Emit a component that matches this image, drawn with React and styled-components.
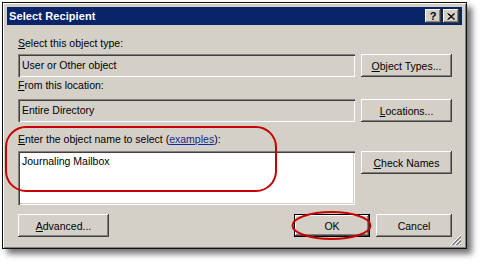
import React from 'react';
import styled, { createGlobalStyle } from 'styled-components';

const GlobalStyle = createGlobalStyle`
  html, body {
    margin: 0;
    padding: 0;
    background: #ffffff;
  }
  body {
    font-family: 'Liberation Sans', Arial, sans-serif;
    font-size: 10.5px;
    color: #000;
  }
`;

const Page = styled.div`
  position: relative;
  padding: 2px 0 0 2px;
  width: 484px;
  height: 267px;
  box-sizing: border-box;
`;

const Dialog = styled.div`
  position: relative;
  width: 465px;
  height: 247px;
  box-sizing: border-box;
  border: 1px solid #111;
  padding: 4px;
  background: #d4d0c8;
  box-shadow: inset 1px 1px #ffffff, inset -1px -1px #808080, 5px 5px 6px rgba(0, 0, 0, 0.55);
  display: flex;
  flex-direction: column;
`;

const TitleBar = styled.div`
  height: 18px;
  background: #0a246a;
  display: flex;
  align-items: center;
  padding: 0 3px 0 2px;
`;

const Title = styled.div`
  flex: 1;
  color: #fff;
  font-weight: bold;
  font-size: 11px;
  letter-spacing: 0.1px;
`;

const CaptionButton = styled.div`
  width: 16px;
  height: 14px;
  box-sizing: border-box;
  background: #d4d0c8;
  margin-left: ${(p) => (p.$gap ? '2px' : '0')};
  box-shadow: inset -1px -1px #404040, inset 1px 1px #ffffff, inset -2px -2px #808080;
  display: flex;
  align-items: center;
  justify-content: center;
  font-weight: bold;
  font-size: 11px;
  line-height: 1;
`;

const Body = styled.div`
  flex: 1;
  padding: 12px 10px 0 11px;
  display: flex;
  flex-direction: column;
`;

const Label = styled.div`
  line-height: 13px;
  height: 13px;
  margin-top: ${(p) => p.$top || 0}px;
  white-space: nowrap;
`;

const Key = styled.span`
  text-decoration: underline;
`;

const Link = styled.span`
  color: #1028a0;
  text-decoration: underline;
`;

const FieldRow = styled.div`
  display: grid;
  grid-template-columns: 337px 91px;
  column-gap: 6px;
  align-items: start;
  margin-top: ${(p) => p.$top || 0}px;
`;

const Field = styled.div`
  height: ${(p) => p.$h || 23}px;
  box-sizing: border-box;
  background: ${(p) => (p.$white ? '#ffffff' : '#d4d0c8')};
  box-shadow: inset 1px 1px #808080, inset 2px 2px #404040, inset -1px -1px #ffffff, inset -2px -2px #d4d0c8;
  padding: ${(p) => (p.$white ? '4px 4px' : '0 4px')};
  line-height: ${(p) => (p.$white ? '13px' : '22px')};
  white-space: nowrap;
`;

const Button = styled.div`
  height: 23px;
  width: ${(p) => p.$w || 91}px;
  box-sizing: border-box;
  background: #d4d0c8;
  box-shadow: ${(p) =>
    p.$default
      ? 'inset 0 0 0 1px #000, inset -2px -2px #404040, inset 2px 2px #ffffff, inset -3px -3px #808080'
      : 'inset -1px -1px #404040, inset 1px 1px #ffffff, inset -2px -2px #808080'};
  display: flex;
  align-items: center;
  justify-content: center;
  white-space: nowrap;
`;

const ButtonRow = styled.div`
  display: flex;
  align-items: center;
  margin-top: 9px;
`;

const Spacer = styled.div`
  flex: 1;
`;

const Gap = styled.div`
  width: 6px;
`;

const Grip = styled.svg`
  position: absolute;
  right: 4px;
  bottom: 2px;
`;

const Annotations = styled.svg`
  position: absolute;
  left: 0;
  top: 0;
  pointer-events: none;
`;

export default function App() {
  return (
    <Page>
      <GlobalStyle />
      <Dialog>
        <TitleBar>
          <Title>Select Recipient</Title>
          <CaptionButton>?</CaptionButton>
          <CaptionButton $gap>
            <svg width="8" height="7" viewBox="0 0 8 7">
              <path d="M0.5 0.5 L7 6.5 M1.5 0.5 L8 6.5 M7 0.5 L0.5 6.5 M8 0.5 L1.5 6.5" stroke="#000" strokeWidth="1" />
            </svg>
          </CaptionButton>
        </TitleBar>
        <Body>
          <Label>
            <Key>S</Key>elect this object type:
          </Label>
          <FieldRow $top={4}>
            <Field>User or Other object</Field>
            <Button>
              <span>
                <Key>O</Key>bject Types...
              </span>
            </Button>
          </FieldRow>
          <Label $top={2}>
            <Key>F</Key>rom this location:
          </Label>
          <FieldRow $top={7}>
            <Field>Entire Directory</Field>
            <Button>
              <span>
                <Key>L</Key>ocations...
              </span>
            </Button>
          </FieldRow>
          <Label $top={11}>
            <Key>E</Key>nter the object name to select (<Link>examples</Link>):
          </Label>
          <FieldRow $top={5}>
            <Field $white $h={54}>Journaling Mailbox</Field>
            <Button>
              <span>
                <Key>C</Key>heck Names
              </span>
            </Button>
          </FieldRow>
          <ButtonRow>
            <Button>
              <span>
                <Key>A</Key>dvanced...
              </span>
            </Button>
            <Spacer />
            <Button $w={76} $default>OK</Button>
            <Gap />
            <Button $w={76}>Cancel</Button>
          </ButtonRow>
        </Body>
        <Grip width="12" height="12" viewBox="0 0 12 12">
          <path d="M11 1 L1 11 M11 5 L5 11 M11 9 L9 11" stroke="#ffffff" strokeWidth="1" />
          <path d="M11 2 L2 11 M11 3 L3 11 M11 6 L6 11 M11 7 L7 11 M11 10 L10 11" stroke="#808080" strokeWidth="1" />
        </Grip>
      </Dialog>
      <Annotations width="484" height="267" viewBox="0 0 484 267">
        <rect x="6" y="127" width="270" height="64" rx="20" ry="20" fill="none" stroke="#c80000" strokeWidth="2" />
        <ellipse cx="331.5" cy="225.5" rx="39" ry="13.5" fill="none" stroke="#c80000" strokeWidth="2" />
      </Annotations>
    </Page>
  );
}
